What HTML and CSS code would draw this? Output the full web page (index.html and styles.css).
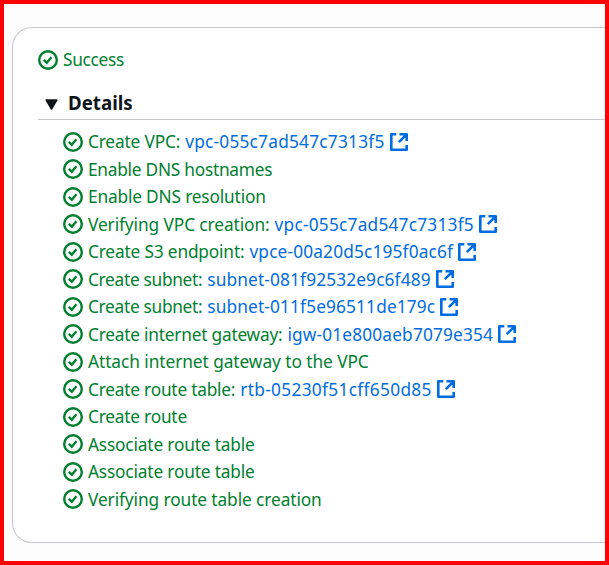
FILE: index.html
```html
<!DOCTYPE html>
<html lang="en">
<head>
<meta charset="utf-8">
<title>Create VPC workflow</title>
<link rel="stylesheet" href="styles.css">
</head>
<body>
<svg class="sprite" aria-hidden="true">
  <symbol id="check" viewBox="0 0 20 20"><circle cx="10" cy="10" r="8.8"/><path d="M5.8 9.9l3 2.8 4.6-5.4"/></symbol>
  <symbol id="external" viewBox="0 0 18 18"><path d="M6.3 1.3H1.3v15.4h15.4v-4.7M9.5 1.3h7.2v6.8M16.2 1.8L8.8 9.2"/></symbol>
</svg>
<main class="panel">
  <div class="status"><svg class="check"><use href="#check"/></svg><span class="label">Success</span></div>
  <h2 class="heading"><svg class="caret" viewBox="0 0 13 11"><path d="M1.2 1h10.6L6.5 10z"/></svg><span>Details</span></h2>
  <ul class="steps">
    <li><svg class="check"><use href="#check"/></svg><span class="label">Create VPC:</span><a>vpc-055c7ad547c7313f5</a><svg class="external"><use href="#external"/></svg></li>
    <li><svg class="check"><use href="#check"/></svg><span class="label dns">Enable DNS hostnames</span></li>
    <li><svg class="check"><use href="#check"/></svg><span class="label">Enable DNS resolution</span></li>
    <li><svg class="check"><use href="#check"/></svg><span class="label verify">Verifying VPC creation:</span><a>vpc-055c7ad547c7313f5</a><svg class="external"><use href="#external"/></svg></li>
    <li><svg class="check"><use href="#check"/></svg><span class="label">Create S3 endpoint:</span><a class="endpoint">vpce-00a20d5c195f0ac6f</a><svg class="external"><use href="#external"/></svg></li>
    <li><svg class="check"><use href="#check"/></svg><span class="label subnet">Create subnet:</span><a class="subnet-id">subnet-081f92532e9c6f489</a><svg class="external"><use href="#external"/></svg></li>
    <li><svg class="check"><use href="#check"/></svg><span class="label subnet">Create subnet:</span><a class="subnet-id">subnet-011f5e96511de179c</a><svg class="external"><use href="#external"/></svg></li>
    <li><svg class="check"><use href="#check"/></svg><span class="label gateway">Create internet gateway:</span><a class="endpoint">igw-01e800aeb7079e354</a><svg class="external"><use href="#external"/></svg></li>
    <li><svg class="check"><use href="#check"/></svg><span class="label attach">Attach internet gateway to the VPC</span></li>
    <li><svg class="check"><use href="#check"/></svg><span class="label gateway">Create route table:</span><a class="route-table">rtb-05230f51cff650d85</a><svg class="external"><use href="#external"/></svg></li>
    <li><svg class="check"><use href="#check"/></svg><span class="label gateway">Create route</span></li>
    <li><svg class="check"><use href="#check"/></svg><span class="label">Associate route table</span></li>
    <li><svg class="check"><use href="#check"/></svg><span class="label">Associate route table</span></li>
    <li><svg class="check"><use href="#check"/></svg><span class="label verify">Verifying route table creation</span></li>
  </ul>
</main>
</body>
</html>
```
FILE: styles.css
```css
* { box-sizing: border-box; }
body {
  margin: 0;
  height: 565px;
  padding: 23px 0 0 8px;
  border: 4px solid #ff0000;
  background: #fcfcfd;
  font: 17.3px/27.5px "Noto Sans", sans-serif;
  color: #00802f;
  overflow: hidden;
}
.sprite { display: none; }
.panel {
  height: 516px;
  border: 1px solid #c6c6cd;
  border-right: 0;
  border-radius: 20px 0 0 20px;
  background: #fff;
  padding: 18px 0 0 25px;
}
.status, .heading, .steps li { display: flex; align-items: center; white-space: nowrap; }
.status { height: 28px; }
.label { letter-spacing: -0.17px; }
.status .label { letter-spacing: -0.3px; }
.dns { letter-spacing: -0.25px; }
.verify { letter-spacing: -0.09px; }
.subnet { letter-spacing: -0.3px; }
.gateway { letter-spacing: -0.22px; }
.attach { letter-spacing: -0.06px; }
.check, .external { fill: none; flex: none; }
.check { width: 20px; height: 20px; margin-right: 5px; stroke: #00802f; stroke-width: 2.4; }
.heading {
  height: 46px;
  margin: 0;
  padding: 13px 0 0 7px;
  border-bottom: 1px solid #c6c6cd;
  color: #0f141a;
  font-size: 18.7px;
  font-weight: 700;
}
.caret { width: 13px; height: 11px; margin: 2px 10px 0 0; fill: #0f141a; stroke: #0f141a; stroke-width: 1.5; stroke-linejoin: round; }
.steps { list-style: none; margin: 0; padding: 8px 0 0 25px; }
.steps li { height: 27.5px; }
.steps a { color: #006ce0; margin-left: 5px; letter-spacing: 0.22px; }
.steps .endpoint { letter-spacing: 0.15px; }
.steps .subnet-id { letter-spacing: 0.13px; }
.steps .route-table { letter-spacing: 0.31px; }
.external { width: 18px; height: 18px; margin-left: 5px; stroke: #006ce0; stroke-width: 2.6; stroke-linejoin: round; }
```
